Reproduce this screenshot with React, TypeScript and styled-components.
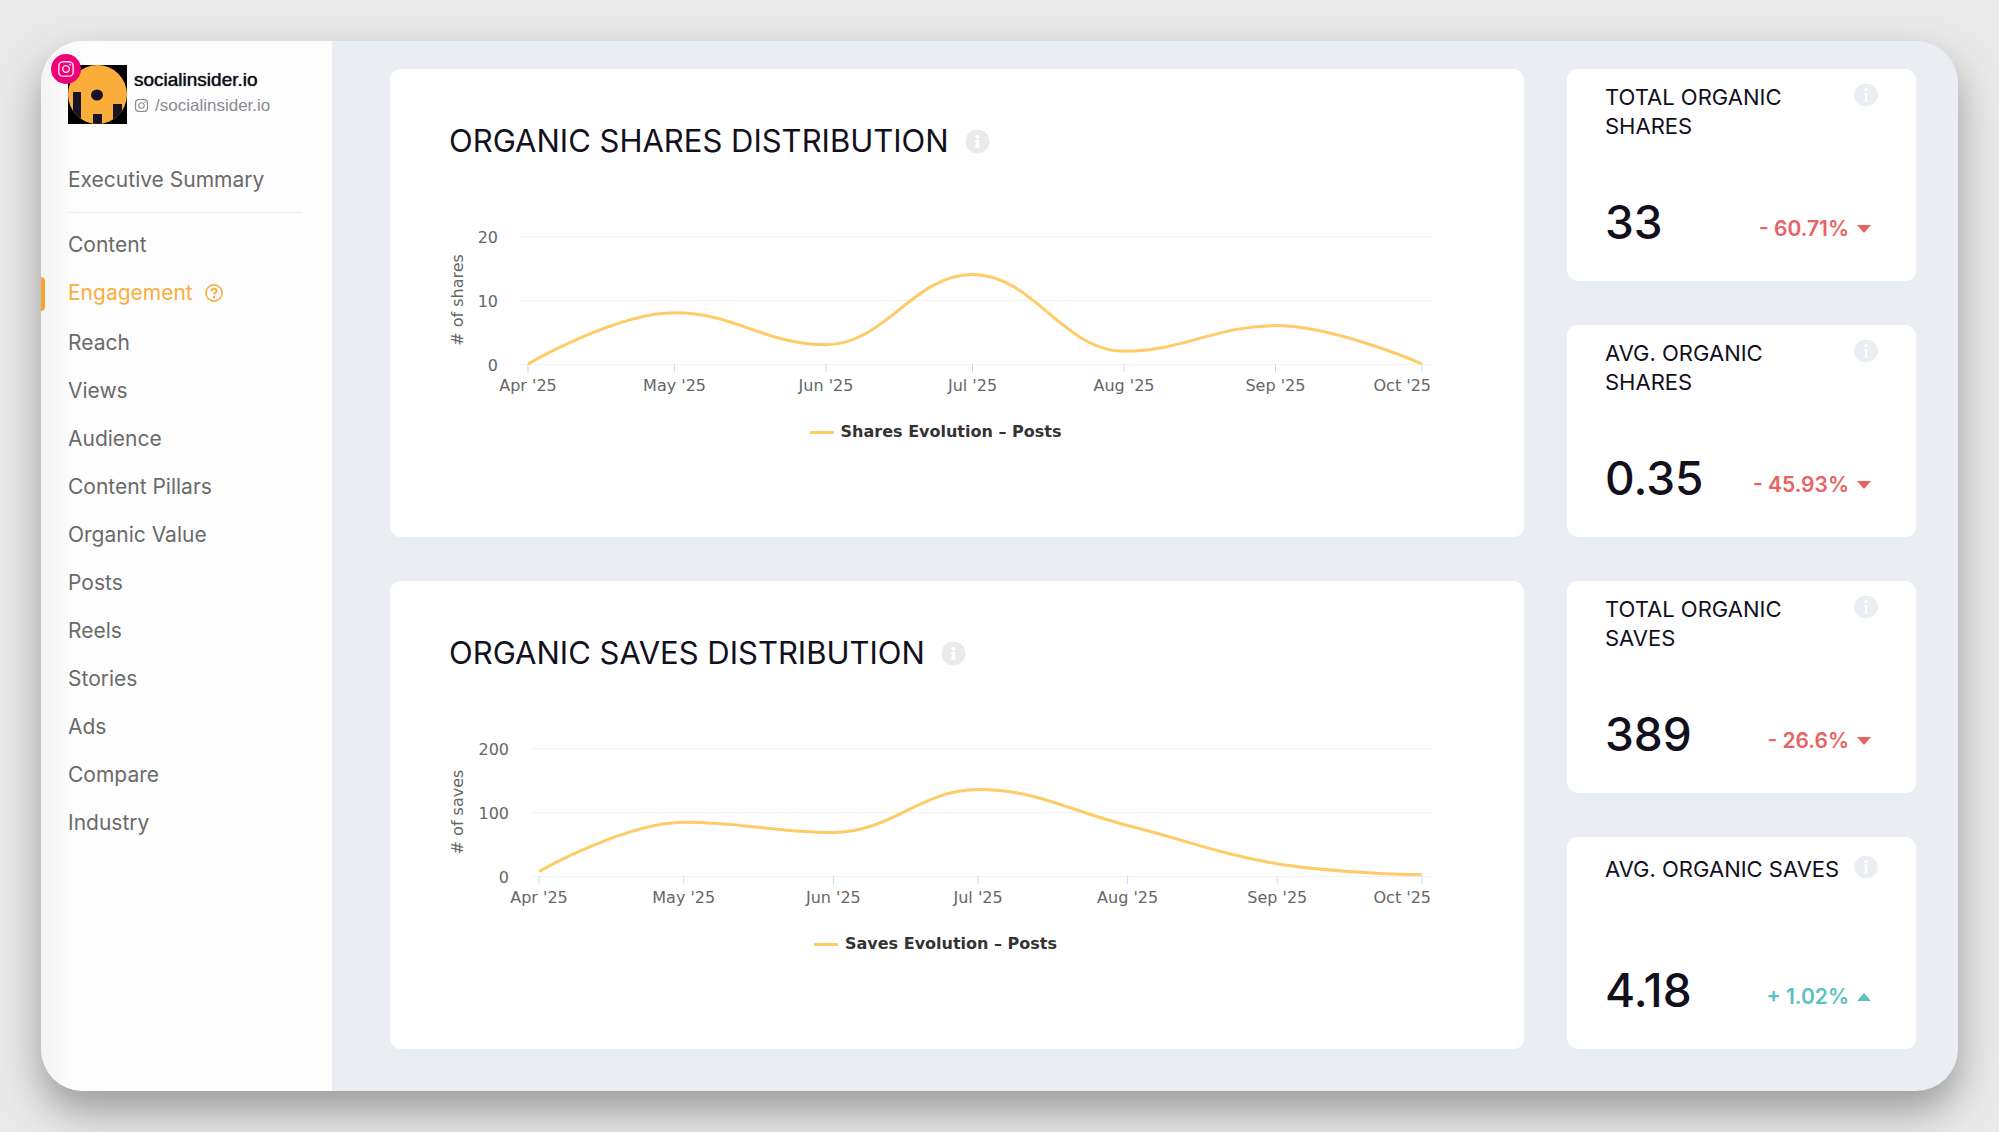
import React from "react";
import styled, { createGlobalStyle } from "styled-components";
import { FaInfoCircle, FaInstagram } from "react-icons/fa";

const colors = {
  ink: "#12101d",
  text: "#6a6a6a",
  accent: "#f9ae3f",
  line: "#ffcb66",
  down: "#ea6163",
  up: "#5bbfc3",
  surface: "#eaedf2",
};

const GlobalStyle = createGlobalStyle`
  * {
    box-sizing: border-box;
  }
  body {
    margin: 0;
    background: #e9e9e9;
    color: ${colors.ink};
    font-family: Inter, "Open Sans", sans-serif;
  }
`;

const Page = styled.div`
  display: flex;
  min-height: 100vh;
  padding: 41px;
`;

const Window = styled.div`
  display: flex;
  flex: 1;
  border-radius: 42px;
  overflow: hidden;
  background: ${colors.surface};
  box-shadow: 0 20px 40px rgba(0, 0, 0, 0.34);
`;

const Sidebar = styled.aside`
  flex: 0 0 291px;
  padding: 24px 30px 24px 27px;
  background: linear-gradient(90deg, #f4f4f4, #fdfdfd 36px);
`;

const Profile = styled.div`
  display: flex;
  align-items: center;
  gap: 7px;
  margin-bottom: 32px;
`;

const Avatar = styled.div`
  position: relative;
  width: 59px;
  height: 59px;
`;

const Badge = styled.span`
  position: absolute;
  top: -11px;
  left: -17px;
  display: flex;
  align-items: center;
  justify-content: center;
  width: 30px;
  height: 30px;
  border-radius: 50%;
  background: #ee0077;
  color: #ffe3f1;
`;

const ProfileText = styled.div`
  display: flex;
  flex-direction: column;
  gap: 2px;
  font-family: "Liberation Sans", Arial, sans-serif;
  padding-bottom: 4px;
`;

const ProfileName = styled.div`
  font-size: 19px;
  line-height: 24px;
  text-shadow: 0 0 1px ${colors.ink};
`;

const ProfileHandle = styled.a`
  display: flex;
  align-items: center;
  gap: 6px;
  color: #8b8a92;
  font-size: 17px;
  line-height: 24px;
  text-decoration: none;
`;

const NavList = styled.ul`
  margin: 0;
  padding: 0;
  list-style: none;

  & + & {
    margin-top: 8px;
    padding-top: 8px;
    border-top: 1px solid #ececec;
  }
`;

const NavLink = styled.a<{ $active?: boolean }>`
  position: relative;
  display: flex;
  align-items: center;
  gap: 12px;
  height: ${(p) => (p.$active ? 50 : 48)}px;
  padding-bottom: ${(p) => (p.$active ? 2 : 0)}px;
  color: ${(p) => (p.$active ? colors.accent : colors.text)};
  font-size: 21px;
  line-height: 24px;
  text-decoration: none;
  white-space: nowrap;
`;

const ActiveMark = styled.span`
  position: absolute;
  left: -27px;
  top: 8px;
  width: 4px;
  height: 34px;
  border-radius: 0 4px 4px 0;
  background: #f5a52f;
`;

const Main = styled.main`
  flex: 1;
  min-width: 0;
  display: grid;
  grid-template-columns: minmax(0, 1fr) 349px;
  gap: 44px 43px;
  padding: 28px 42px 42px 58px;
`;

const ChartCard = styled.section`
  padding: 54px 92px 40px 49px;
  border-radius: 11px;
  background: #fff;
`;

const ChartHeading = styled.div`
  display: flex;
  align-items: center;
  gap: 16px;
  padding-left: 10px;
`;

const ChartTitle = styled.h2`
  margin: 0;
  font-size: 31px;
  line-height: 36px;
  font-weight: 400;
  white-space: nowrap;
`;

const InfoButton = styled.button<{ $neutral?: boolean }>`
  display: flex;
  flex: none;
  padding: 0;
  border: 0;
  background: none;
  color: ${(p) => (p.$neutral ? "#e9eaec" : colors.surface)};
  cursor: pointer;
`;

const ChartFigure = styled.figure`
  margin: 41px 0 0;
  font-family: "DejaVu Sans", Verdana, sans-serif;
`;

const ChartSvg = styled.svg`
  display: block;
  width: 100%;
  height: auto;
  fill: #666;
  font-size: 16px;
`;

const Legend = styled.figcaption`
  display: flex;
  align-items: center;
  justify-content: center;
  gap: 7px;
  margin-top: 20px;
  color: #333;
  font-size: 16px;
  line-height: 24px;
  font-weight: 700;
`;

const LegendLine = styled.span`
  width: 24px;
  height: 3px;
  background: ${colors.line};
`;

const StatColumn = styled.div`
  display: grid;
  grid-template-rows: 1fr 1fr;
  gap: 44px;
`;

const StatCard = styled.section<{ $single?: boolean }>`
  display: flex;
  flex-direction: column;
  justify-content: space-between;
  padding: ${(p) => (p.$single ? 18 : 14)}px 38px 30px;
  border-radius: 11px;
  background: #fff;
`;

const StatHeading = styled.div`
  display: flex;
  align-items: flex-start;
  justify-content: space-between;
`;

const StatTitle = styled.h3`
  max-width: 240px;
  margin: 0;
  font-size: 22px;
  line-height: 29px;
  font-weight: 400;
`;

const StatRow = styled.div`
  display: flex;
  align-items: flex-end;
  justify-content: space-between;
  padding-right: 7px;
`;

const StatValue = styled.div`
  font-size: 46px;
  line-height: 58px;
  font-weight: 500;
`;

const StatDelta = styled.div<{ $up?: boolean }>`
  display: flex;
  align-items: center;
  gap: 8px;
  padding-bottom: 8px;
  color: ${(p) => (p.$up ? colors.up : colors.down)};
  font-size: 21px;
  line-height: 28px;
  font-weight: 600;
`;

const Caret = styled.span<{ $up?: boolean }>`
  width: 14px;
  height: 8px;
  background: currentColor;
  clip-path: ${(p) =>
    p.$up ? "polygon(50% 0, 100% 100%, 0 100%)" : "polygon(0 0, 100% 0, 50% 100%)"};
`;

function Logo() {
  return (
    <svg width="59" height="59" viewBox="0 0 59 59" role="img" aria-label="socialinsider.io">
      <clipPath id="disc">
        <circle cx="29.5" cy="29.5" r="29.5" />
      </clipPath>
      <rect width="59" height="59" fill="#000" />
      <g clipPath="url(#disc)">
        <rect width="59" height="59" fill="#fbae3c" />
        <g fill="#181327">
          <rect x="5" y="27" width="8" height="32" />
          <rect x="25" y="49" width="9" height="10" />
          <rect x="45" y="39" width="9" height="20" />
          <ellipse cx="29" cy="30" rx="6" ry="5.5" />
        </g>
      </g>
    </svg>
  );
}

function HelpIcon() {
  return (
    <svg width="18" height="18" viewBox="0 0 18 18" fill="none" stroke="currentColor" aria-hidden="true">
      <circle cx="9" cy="9" r="8.1" strokeWidth="1.6" />
      <path d="M6.6 7.2c0-1.5 1-2.4 2.5-2.4s2.5.9 2.5 2.1c0 1.7-2.4 1.8-2.4 3.6" strokeWidth="2" />
      <circle cx="9.1" cy="13" r="1.2" fill="currentColor" stroke="none" />
    </svg>
  );
}

function SmallInfoIcon() {
  return (
    <svg width="24" height="24" viewBox="0 0 24 24" aria-hidden="true">
      <ellipse cx="12" cy="12" rx="11.8" ry="11.3" fill="currentColor" />
      <circle cx="12" cy="6.6" r="1.5" fill="#fff" />
      <path d="M9.8 9.8h3.5v7.6h1.1v1.1H9.8v-1.1h1.1v-6.5H9.8z" fill="#fff" />
    </svg>
  );
}

const VIEW_WIDTH = 993;
const PLOT_RIGHT = 993;
const LAST_POINT = 983;
const GRID_TOP = 36;
const GRID_BOTTOM = 164;
const MONTHS = ["Apr '25", "May '25", "Jun '25", "Jul '25", "Aug '25", "Sep '25", "Oct '25"];
const MONTH_DAYS = [0, 30, 61, 91, 122, 153, 183];

type Point = { x: number; y: number };

/* Smooth curve whose control points never overshoot the neighbouring values. */
function splinePath(points: Point[]) {
  let path = `M${points[0].x} ${points[0].y}`;
  let out: Point = points[0];
  for (let i = 1; i < points.length; i++) {
    const prev = points[i - 1];
    const cur = points[i];
    const next = points[i + 1];
    let left: Point = cur;
    let right: Point = cur;
    if (next) {
      const lx = (1.5 * cur.x + prev.x) / 2.5;
      const rx = (1.5 * cur.x + next.x) / 2.5;
      let ly = (1.5 * cur.y + prev.y) / 2.5;
      let ry = (1.5 * cur.y + next.y) / 2.5;
      const shift = ((ry - ly) * (rx - cur.x)) / (rx - lx) + cur.y - ry;
      ly += shift;
      ry += shift;
      const maxPrev = Math.max(prev.y, cur.y);
      const minPrev = Math.min(prev.y, cur.y);
      if (ly > maxPrev || ly < minPrev) {
        ly = ly > maxPrev ? maxPrev : minPrev;
        ry = 2 * cur.y - ly;
      }
      const maxNext = Math.max(next.y, cur.y);
      const minNext = Math.min(next.y, cur.y);
      if (ry > maxNext || ry < minNext) {
        ry = ry > maxNext ? maxNext : minNext;
        ly = 2 * cur.y - ry;
      }
      left = { x: lx, y: ly };
      right = { x: rx, y: ry };
    }
    path += ` C${out.x} ${out.y} ${left.x} ${left.y} ${cur.x} ${cur.y}`;
    out = right;
  }
  return path;
}

type ChartProps = { unit: string; series: string; max: number; values: number[]; firstPoint: number };

function Chart({ unit, series, max, values, firstPoint }: ChartProps) {
  const xs = MONTH_DAYS.map((d) => firstPoint + ((LAST_POINT - firstPoint) * d) / 183);
  const toY = (v: number) => GRID_BOTTOM - ((GRID_BOTTOM - GRID_TOP) * v) / max;
  const points = values.map((v, i) => ({ x: xs[i], y: toY(v) }));
  const plotLeft = firstPoint - 8;
  return (
    <ChartFigure>
      <ChartSvg viewBox={`0 0 ${VIEW_WIDTH} 200`} role="img" aria-label={series}>
        {[max, max / 2, 0].map((v) => (
          <g key={v}>
            <line x1={plotLeft} x2={PLOT_RIGHT} y1={toY(v) + 0.5} y2={toY(v) + 0.5} stroke="#f2f2f2" />
            <text x={plotLeft - 22} y={toY(v) + 7} textAnchor="end">
              {v}
            </text>
          </g>
        ))}
        {xs.map((x, i) => (
          <g key={MONTHS[i]}>
            <line x1={x} x2={x} y1={GRID_BOTTOM} y2={GRID_BOTTOM + 8} stroke="#ccd6eb" />
            <text
              x={i === xs.length - 1 ? PLOT_RIGHT - 1 : x}
              y={GRID_BOTTOM + 27}
              textAnchor={i === xs.length - 1 ? "end" : "middle"}
            >
              {MONTHS[i]}
            </text>
          </g>
        ))}
        <text transform={`translate(24 ${(GRID_TOP + GRID_BOTTOM) / 2}) rotate(-90)`} textAnchor="middle">
          {unit}
        </text>
        <path
          d={splinePath(points)}
          fill="none"
          stroke={colors.line}
          strokeWidth="3"
          strokeLinejoin="round"
        />
      </ChartSvg>
      <Legend>
        <LegendLine />
        {series}
      </Legend>
    </ChartFigure>
  );
}

type StatProps = { title: string; value: string; delta: string; up?: boolean; single?: boolean };

function Stat({ title, value, delta, up, single }: StatProps) {
  return (
    <StatCard $single={single}>
      <StatHeading>
        <StatTitle>{title}</StatTitle>
        <InfoButton type="button" aria-label={`About ${title}`}>
          <SmallInfoIcon />
        </InfoButton>
      </StatHeading>
      <StatRow>
        <StatValue>{value}</StatValue>
        <StatDelta $up={up}>
          {delta}
          <Caret $up={up} />
        </StatDelta>
      </StatRow>
    </StatCard>
  );
}

const NAV = [
  "Content",
  "Engagement",
  "Reach",
  "Views",
  "Audience",
  "Content Pillars",
  "Organic Value",
  "Posts",
  "Reels",
  "Stories",
  "Ads",
  "Compare",
  "Industry",
];

type SectionProps = ChartProps & { title: string; stats: StatProps[] };

const SECTIONS: SectionProps[] = [
  {
    title: "ORGANIC SHARES DISTRIBUTION",
    unit: "# of shares",
    series: "Shares Evolution – Posts",
    max: 20,
    values: [0, 8, 3, 14, 2, 6, 0],
    firstPoint: 89,
    stats: [
      { title: "TOTAL ORGANIC SHARES", value: "33", delta: "- 60.71%" },
      { title: "AVG. ORGANIC SHARES", value: "0.35", delta: "- 45.93%" },
    ],
  },
  {
    title: "ORGANIC SAVES DISTRIBUTION",
    unit: "# of saves",
    series: "Saves Evolution – Posts",
    max: 200,
    values: [7, 84, 68, 135, 79, 19, 2],
    firstPoint: 100,
    stats: [
      { title: "TOTAL ORGANIC SAVES", value: "389", delta: "- 26.6%" },
      { title: "AVG. ORGANIC SAVES", value: "4.18", delta: "+ 1.02%", up: true, single: true },
    ],
  },
];

export default function App() {
  return (
    <Page>
      <GlobalStyle />
      <Window>
        <Sidebar>
          <Profile>
            <Avatar>
              <Logo />
              <Badge>
                <FaInstagram size={18} />
              </Badge>
            </Avatar>
            <ProfileText>
              <ProfileName>socialinsider.io</ProfileName>
              <ProfileHandle href="#profile">
                <FaInstagram size={15} />
                /socialinsider.io
              </ProfileHandle>
            </ProfileText>
          </Profile>
          <nav>
            <NavList>
              <li>
                <NavLink href="#summary">Executive Summary</NavLink>
              </li>
            </NavList>
            <NavList>
              {NAV.map((label) => {
                const active = label === "Engagement";
                return (
                  <li key={label}>
                    <NavLink href="#" $active={active} aria-current={active ? "page" : undefined}>
                      {active && <ActiveMark />}
                      {label}
                      {active && <HelpIcon />}
                    </NavLink>
                  </li>
                );
              })}
            </NavList>
          </nav>
        </Sidebar>
        <Main>
          {SECTIONS.map(({ title, stats, ...chart }) => (
            <React.Fragment key={title}>
              <ChartCard>
                <ChartHeading>
                  <ChartTitle>{title}</ChartTitle>
                  <InfoButton type="button" $neutral aria-label={`About ${title}`}>
                    <FaInfoCircle size={25} />
                  </InfoButton>
                </ChartHeading>
                <Chart {...chart} />
              </ChartCard>
              <StatColumn>
                {stats.map((s) => (
                  <Stat key={s.title} {...s} />
                ))}
              </StatColumn>
            </React.Fragment>
          ))}
        </Main>
      </Window>
    </Page>
  );
}
